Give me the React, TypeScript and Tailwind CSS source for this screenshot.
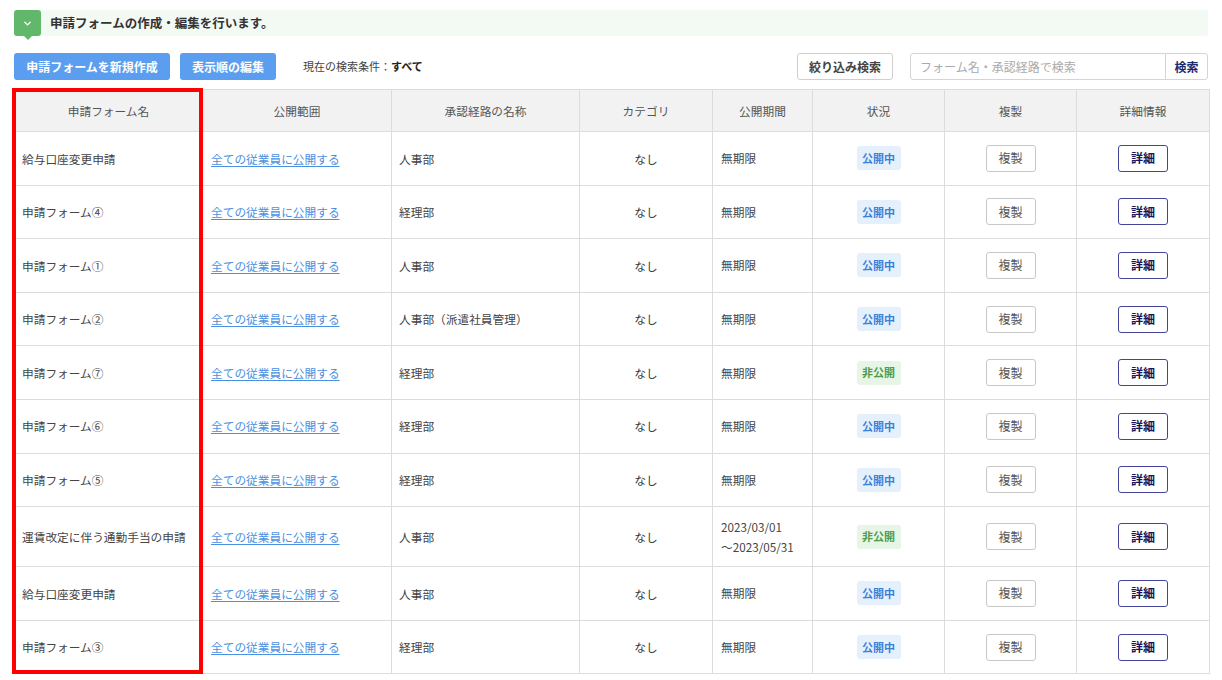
import { ChevronDown } from 'lucide-react';

type Row = {
  name: string;
  route: string;
  period: string[];
  open: boolean;
};

const rows: Row[] = [
  { name: '給与口座変更申請', route: '人事部', period: ['無期限'], open: true },
  { name: '申請フォーム④', route: '経理部', period: ['無期限'], open: true },
  { name: '申請フォーム①', route: '人事部', period: ['無期限'], open: true },
  { name: '申請フォーム②', route: '人事部（派遣社員管理）', period: ['無期限'], open: true },
  { name: '申請フォーム⑦', route: '経理部', period: ['無期限'], open: false },
  { name: '申請フォーム⑥', route: '経理部', period: ['無期限'], open: true },
  { name: '申請フォーム⑤', route: '経理部', period: ['無期限'], open: true },
  {
    name: '運賃改定に伴う通勤手当の申請',
    route: '人事部',
    period: ['2023/03/01', '～2023/05/31'],
    open: false,
  },
  { name: '給与口座変更申請', route: '人事部', period: ['無期限'], open: true },
  { name: '申請フォーム③', route: '経理部', period: ['無期限'], open: true },
];

const headers = ['申請フォーム名', '公開範囲', '承認経路の名称', 'カテゴリ', '公開期間', '状況', '複製', '詳細情報'];
const widths = ['w-[188px]', 'w-[189px]', 'w-[188px]', 'w-[133px]', 'w-[100px]', 'w-[132px]', 'w-[132px]', 'w-[133px]'];

export default function App() {
  return (
    <div className="min-h-screen bg-white px-[14px] pt-[10px] pb-[6px] font-['Noto_Sans_CJK_JP','Noto_Sans',sans-serif] text-[11.7px] text-[#444]">
      {/* Info banner */}
      <div className="flex h-[26px] w-[1194px] items-center rounded-[3px] bg-[#f3f9f3]">
        <div className="relative flex h-[26px] w-[27px] items-center justify-center rounded-[3px] bg-[#62b86a]">
          <ChevronDown className="h-[11px] w-[11px] text-white" strokeWidth={3} />
          <span className="absolute -bottom-[4px] left-1/2 h-0 w-0 -translate-x-1/2 border-x-[4px] border-t-[4px] border-x-transparent border-t-[#62b86a]" />
        </div>
        <p className="ml-[9px] text-[12.5px] font-bold text-[#333]">申請フォームの作成・編集を行います。</p>
      </div>

      {/* Toolbar */}
      <div className="mt-[17px] flex h-[27px] w-[1194px] items-center">
        <button className="h-[27px] w-[156px] rounded-[3px] bg-[#5b9ef0] text-[12px] font-bold text-white">
          申請フォームを新規作成
        </button>
        <button className="ml-[10px] h-[27px] w-[96px] rounded-[3px] bg-[#5b9ef0] text-[12px] font-bold text-white">
          表示順の編集
        </button>
        <span className="ml-[27px] text-[11px] text-[#444]">
          現在の検索条件：<span className="font-bold text-[#222]">すべて</span>
        </span>
        <div className="ml-auto flex items-center">
          <button className="h-[27px] w-[96px] rounded-[3px] border border-[#cfcfcf] bg-white text-[12px] font-bold text-[#444]">
            絞り込み検索
          </button>
          <div className="ml-[17px] flex h-[27px] w-[298px] items-center rounded-[3px] border border-[#d4d4d4] bg-white">
            <span className="flex-1 pl-[9px] text-[12px] text-[#aaa]">フォーム名・承認経路で検索</span>
            <span className="flex h-full w-[42px] items-center justify-center border-l border-[#d4d4d4] text-[12px] font-bold text-[#1d2a6e]">
              検索
            </span>
          </div>
        </div>
      </div>

      {/* Table */}
      <div className="relative mt-[9px] w-[1195px]">
        <table className="w-[1195px] table-fixed border-collapse">
          <thead>
            <tr className="h-[42px] bg-[#f2f2f2]">
              {headers.map((h, i) => (
                <th key={h} className={`${widths[i]} border border-[#dcdcdc] text-[11.7px] font-normal text-[#555]`}>
                  {h}
                </th>
              ))}
            </tr>
          </thead>
          <tbody>
            {rows.map((r, i) => (
              <tr key={i} className={r.period.length > 1 ? 'h-[60px]' : 'h-[53.6px]'}>
                <td className="border border-[#dcdcdc] pl-[7px] text-[#444]">{r.name}</td>
                <td className="border border-[#dcdcdc] pl-[8px]">
                  <a className="text-[#4a90e2] underline underline-offset-2">全ての従業員に公開する</a>
                </td>
                <td className="border border-[#dcdcdc] pl-[7px] text-[#444]">{r.route}</td>
                <td className="border border-[#dcdcdc] text-center text-[#333]">なし</td>
                <td className="border border-[#dcdcdc] pl-[8px] leading-[20px] text-[#444]">
                  {r.period.map((p) => (
                    <div key={p}>{p}</div>
                  ))}
                </td>
                <td className="border border-[#dcdcdc] text-center">
                  {r.open ? (
                    <span className="inline-flex h-[24px] w-[44px] items-center justify-center rounded-[3px] bg-[#e5f0fd] text-[11px] font-bold text-[#3b7fd6]">
                      公開中
                    </span>
                  ) : (
                    <span className="inline-flex h-[24px] w-[44px] items-center justify-center rounded-[3px] bg-[#e6f5e6] text-[11px] font-bold text-[#4c9c4c]">
                      非公開
                    </span>
                  )}
                </td>
                <td className="border border-[#dcdcdc] text-center">
                  <button className="h-[27px] w-[50px] rounded-[3px] border border-[#c8c8c8] bg-white text-[12px] text-[#555]">
                    複製
                  </button>
                </td>
                <td className="border border-[#dcdcdc] text-center">
                  <button className="h-[27px] w-[50px] rounded-[3px] border border-[#44449a] bg-white text-[12px] font-bold text-[#16165e]">
                    詳細
                  </button>
                </td>
              </tr>
            ))}
          </tbody>
        </table>
        {/* Highlight frame */}
        <div className="pointer-events-none absolute -top-[1px] -left-[2px] bottom-0 w-[191px] border-4 border-[#ff0000]" />
      </div>
    </div>
  );
}
